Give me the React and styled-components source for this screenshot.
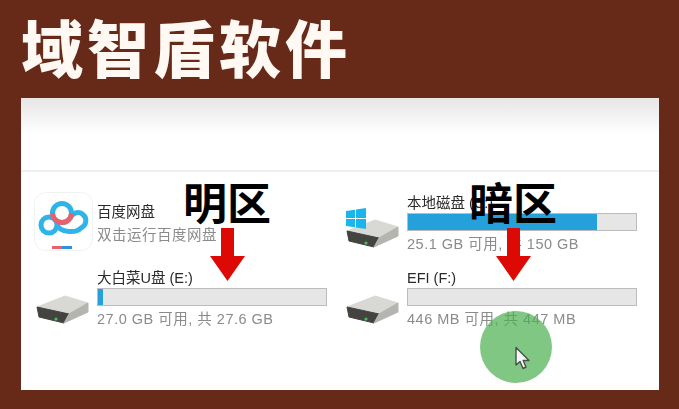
import React from "react";
import styled, { createGlobalStyle } from "styled-components";

const GlobalStyle = createGlobalStyle`
  html, body {
    margin: 0;
    padding: 0;
    background: #682a18;
  }
`;

const CJK = `"Liberation Sans", "Noto Sans CJK SC", sans-serif`;

const Page = styled.div`
  width: 679px;
  height: 409px;
  box-sizing: border-box;
  padding: 0 20px 19px 21px;
  display: flex;
  flex-direction: column;
  overflow: hidden;
  background: #682a18;
`;

const Title = styled.h1`
  margin: 0;
  height: 98px;
  line-height: 92px;
  font-family: "Noto Sans CJK SC", sans-serif;
  font-size: 62px;
  font-weight: 900;
  letter-spacing: 4px;
  color: #fff8f3;
  white-space: nowrap;
`;

const Panel = styled.div`
  position: relative;
  flex: 1;
  background: #fff;
  overflow: hidden;
`;

const Ribbon = styled.div`
  height: 72px;
  border-bottom: 2px solid #efefef;
  background: linear-gradient(#e6e6e6 0, #f8f8f8 26px, #fff 36px);
`;

const Grid = styled.div`
  display: grid;
  grid-template-columns: 310px 310px;
  grid-auto-rows: 75px;
  padding: 12px 0 0 13px;
  filter: blur(0.5px);
`;

const Item = styled.div`
  display: flex;
  align-items: center;
`;

const IconSlot = styled.div`
  width: ${(p) => 63 - p.$inset}px;
  flex: none;
  margin-left: ${(p) => p.$inset}px;
  margin-top: ${(p) => p.$drop}px;
  display: flex;
`;

const Info = styled.div`
  width: 230px;
  display: flex;
  flex-direction: column;
`;

const Name = styled.div`
  height: 22px;
  line-height: 24px;
  font-family: ${CJK};
  font-size: 14.5px;
  color: #2a2a2a;
  white-space: nowrap;
`;

const Detail = styled.div`
  height: 22px;
  line-height: 26px;
  font-family: ${CJK};
  font-size: 14.5px;
  letter-spacing: 0.5px;
  color: #8b8b8b;
  white-space: nowrap;
`;

const Bar = styled.div`
  height: 16px;
  background: #e6e6e6;
  border: 1px solid #bcbcbc;
`;

const Fill = styled.div`
  height: 100%;
  background: #26a0da;
`;

const Callout = styled.div`
  position: absolute;
  top: ${(p) => p.$top}px;
  left: ${(p) => p.$left}px;
  display: flex;
  flex-direction: column;
  align-items: center;
  width: 100px;
`;

const CalloutText = styled.div`
  height: 52px;
  line-height: 50px;
  font-family: "Noto Sans CJK SC", sans-serif;
  font-size: 44px;
  font-weight: 700;
  color: #000;
  white-space: nowrap;
`;

const Click = styled.div`
  position: absolute;
  left: 459px;
  top: 213px;
  width: 72px;
  height: 72px;
  border-radius: 50%;
  background: rgba(76, 175, 80, 0.7);
  display: flex;
  align-items: center;
  justify-content: center;
`;

const Arrow = () => (
  <svg width="35" height="53" viewBox="0 0 35 53">
    <path d="M11 0H24V28H35L17.500 53L0 28H11Z" fill="#dc0905" />
  </svg>
);

const Cursor = () => (
  <svg width="18" height="24" viewBox="0 0 18 24" style={{ marginTop: 22, marginLeft: 14 }}>
    <path d="M2 1.500V19L6 15.500L9 22.500L12 21L9.200 14.500H15Z" fill="#f4f7f4" stroke="#4b4f4b" strokeWidth="1.400" strokeLinejoin="round" />
  </svg>
);

const DriveShape = () => (
  <g strokeLinejoin="round" strokeWidth="1">
    <path d="M1 12L29 1L52 8L33 19Z" fill="#d8d8d4" stroke="#d8d8d4" />
    <path d="M1 12L33 19L28 28L3 22Z" fill="#43433f" stroke="#43433f" />
    <path d="M33 19L52 8V17L28 28Z" fill="#b5b5b0" stroke="#b5b5b0" />
    <circle cx="20" cy="24" r="1.600" fill="#47c05c" />
  </g>
);

const Drive = () => (
  <svg width="53" height="30" viewBox="0 0 53 30">
    <DriveShape />
  </svg>
);

const SystemDrive = () => (
  <svg width="53" height="41" viewBox="0 0 53 41">
    <g transform="translate(0 11)">
      <DriveShape />
    </g>
    <path d="M0 3L9 1.800V10H0ZM10 1.600L20 0V10H10ZM0 11H9V19.200L0 18ZM10 11H20V21L10 19.400Z" fill="#19b6ee" />
  </svg>
);

const BaiduLogo = () => (
  <svg width="59" height="59" viewBox="0 0 59 59">
    <rect x="0.500" y="0.500" width="58" height="58" rx="11" fill="#fff" stroke="#f2f2f2" />
    <circle cx="15" cy="33" r="8" fill="none" stroke="#2fb4ea" strokeWidth="5" />
    <path d="M23 33C26 40 41 42 47 36A8 8 0 1 0 36 27" fill="none" stroke="#2fb4ea" strokeWidth="5" />
    <circle cx="28" cy="21" r="9.500" fill="none" stroke="#2fb4ea" strokeWidth="5" />
    <path d="M18.500 21A9.500 9.500 0 0 0 37.500 21" fill="none" stroke="#e9616f" strokeWidth="5" />
    <rect x="18" y="54" width="10" height="3" fill="#e9616f" />
    <rect x="28" y="54" width="10" height="3" fill="#2f8fe0" />
  </svg>
);

const drives = [
  { icon: <BaiduLogo />, inset: 0, drop: 0, name: "百度网盘", detail: "双击运行百度网盘" },
  { icon: <SystemDrive />, inset: 2, drop: 14, name: "本地磁盘 (C:)", detail: "25.1 GB 可用, 共 150 GB", used: 83 },
  { icon: <Drive />, inset: 2, drop: 26, name: "大白菜U盘 (E:)", detail: "27.0 GB 可用, 共 27.6 GB", used: 2 },
  { icon: <Drive />, inset: 2, drop: 26, name: "EFI (F:)", detail: "446 MB 可用, 共 447 MB", used: 0 },
];

export default function App() {
  return (
    <Page>
      <GlobalStyle />
      <Title>域智盾软件</Title>
      <Panel>
        <Ribbon />
        <Grid>
          {drives.map((d) => (
            <Item key={d.name}>
              <IconSlot $inset={d.inset} $drop={d.drop}>{d.icon}</IconSlot>
              <Info>
                <Name>{d.name}</Name>
                {d.used !== undefined && (
                  <Bar>
                    <Fill style={{ width: `${d.used}%` }} />
                  </Bar>
                )}
                <Detail>{d.detail}</Detail>
              </Info>
            </Item>
          ))}
        </Grid>
        <Click>
          <Cursor />
        </Click>
        <Callout $left={156} $top={78}>
          <CalloutText>明区</CalloutText>
          <Arrow />
        </Callout>
        <Callout $left={442} $top={78}>
          <CalloutText>暗区</CalloutText>
          <Arrow />
        </Callout>
      </Panel>
    </Page>
  );
}
